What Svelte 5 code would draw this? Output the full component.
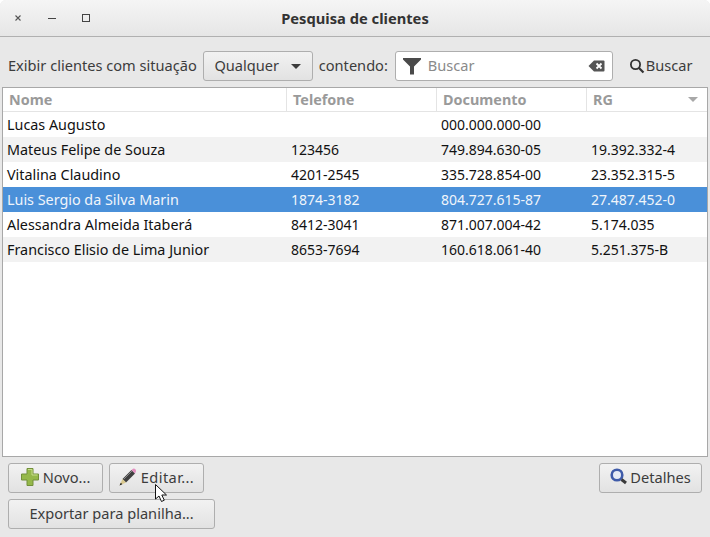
<script>
    const rows = [
        { nome: 'Lucas Augusto', tel: '', doc: '000.000.000-00', rg: '' },
        { nome: 'Mateus Felipe de Souza', tel: '123456', doc: '749.894.630-05', rg: '19.392.332-4' },
        { nome: 'Vitalina Claudino', tel: '4201-2545', doc: '335.728.854-00', rg: '23.352.315-5' },
        { nome: 'Luis Sergio da Silva Marin', tel: '1874-3182', doc: '804.727.615-87', rg: '27.487.452-0', selected: true },
        { nome: 'Alessandra Almeida Itaberá', tel: '8412-3041', doc: '871.007.004-42', rg: '5.174.035' },
        { nome: 'Francisco Elisio de Lima Junior', tel: '8653-7694', doc: '160.618.061-40', rg: '5.251.375-B' }
    ];
</script>

<div class="window">
    <header class="titlebar">
        <div class="controls">
            <svg width="10" height="10" viewBox="0 0 10 10"><path d="M2.500 2.500l5 5M7.500 2.500l-5 5" stroke="#555" stroke-width="1.100" /></svg>
            <svg width="10" height="10" viewBox="0 0 10 10"><path d="M1 5.500h8" stroke="#444" stroke-width="1" /></svg>
            <svg width="10" height="10" viewBox="0 0 10 10"><rect x="1.500" y="1.500" width="7" height="7" fill="none" stroke="#444" /></svg>
        </div>
        <div class="title">Pesquisa de clientes</div>
    </header>

    <div class="toolbar">
        <span class="label">Exibir clientes com situação</span>
        <button class="btn combo">Qualquer <span class="arrow"></span></button>
        <span class="label contendo">contendo:</span>
        <div class="search">
            <svg width="18" height="18" viewBox="0 0 18 18"><path d="M0 1h18v1.500L11 9.500V17.500H7V9.500L0 2.500z" fill="#4a4a4a" /></svg>
            <span class="placeholder">Buscar</span>
            <svg width="17" height="12" viewBox="0 0 17 12"><path d="M6 .5h9.500a1 1 0 0 1 1 1v9a1 1 0 0 1-1 1H6L.5 6z" fill="#555" /><path d="M8.500 3.500l5 5M13.500 3.500l-5 5" stroke="#fff" stroke-width="1.800" /></svg>
        </div>
        <div class="find">
            <svg width="16" height="16" viewBox="0 0 16 16"><circle cx="6.500" cy="6.500" r="4.600" fill="none" stroke="#333" stroke-width="1.800" /><path d="M10 10l4.500 4.500" stroke="#333" stroke-width="2.200" /></svg>
            <span class="label">Buscar</span>
        </div>
    </div>

    <div class="table">
        <div class="row head">
            <div>Nome</div>
            <div>Telefone</div>
            <div>Documento</div>
            <div>RG<span class="sort"></span></div>
        </div>
        {#each rows as r}
            <div class="row item" class:selected={r.selected}>
                <div class="name">{r.nome}</div>
                <div>{r.tel}</div>
                <div>{r.doc}</div>
                <div>{r.rg}</div>
            </div>
        {/each}
    </div>

    <div class="actions">
        <div class="line">
            <button class="btn w-novo">
                <svg width="18" height="18" viewBox="0 0 18 18">
                    <path d="M6 .5h6v5.500h5.500v6H12v5.500H6V12H.5V6H6z" fill="#95b84a" stroke="#72903a" />
                    <path d="M7 1.500h4v5.500h5.500" fill="none" stroke="#c6dc8c" />
                </svg>
                Novo...
            </button>
            <button class="btn w-editar">
                <svg width="18" height="18" viewBox="0 0 18 18">
                    <path d="M3.500 11L12.500 2l3.500 3.500-9 9z" fill="#3f3f3f" />
                    <path d="M5 11L13 3" stroke="#8a8a8a" />
                    <path d="M12.500 2L14 .8q1-.8 2.200.300t.700 2.600L16 5.500z" fill="#e48fc0" />
                    <path d="M.5 17.500l3-6.500 3.500 3.500z" fill="#d9c88e" />
                    <path d="M.5 17.500l1.300-2.800 1.500 1.500z" fill="#222" />
                </svg>
                Editar...
                <svg class="cursor" width="14" height="19" viewBox="0 0 14 19"><path d="M.500.500v14.500l3.500-3 2.500 5.500 2.800-1.300-2.500-5.200h4.700z" fill="#fff" stroke="#111" /></svg>
            </button>
            <button class="btn w-detalhes">
                <svg width="18" height="18" viewBox="0 0 18 18">
                    <circle cx="7" cy="7" r="5.300" fill="#e6ebf5" stroke="#3f5ba9" stroke-width="2.600" />
                    <path d="M11.500 11.500l4.500 3.500" stroke="#3a3a3a" stroke-width="3" />
                </svg>
                Detalhes
            </button>
        </div>
        <button class="btn w-exportar">Exportar para planilha...</button>
    </div>
</div>

<style>
    :global(body) {
        margin: 0;
        background: #fff;
    }

    .window {
        width: 710px;
        height: 537px;
        display: flex;
        flex-direction: column;
        overflow: hidden;
        background: #e8e8e8;
        border-radius: 6px 6px 0 0;
        font-family: "Noto Sans", sans-serif;
        font-size: 14.6px;
        color: #3c3c3c;
    }

    .titlebar {
        height: 36px;
        flex-shrink: 0;
        display: flex;
        align-items: center;
        justify-content: center;
        position: relative;
        background: linear-gradient(#f5f5f5, #e6e6e6);
        border-bottom: 1px solid #b0b0b0;
    }

    .controls {
        position: absolute;
        left: 13px;
        top: 13px;
        display: flex;
        gap: 24px;
    }

    .controls svg {
        display: block;
    }

    .title {
        font-weight: 700;
        font-size: 14.7px;
        color: #333;
    }

    .toolbar {
        height: 30px;
        margin-top: 14px;
        padding: 0 8px;
        display: flex;
        align-items: center;
        gap: 6px;
        flex-shrink: 0;
    }

    .label {
        padding-bottom: 2px;
    }

    .contendo {
        margin-right: 1px;
    }

    .btn {
        height: 30px;
        box-sizing: border-box;
        border: 1px solid #aeaeae;
        border-radius: 3px;
        background: linear-gradient(#f2f2f2, #e2e2e2);
        font: inherit;
        color: #3c3c3c;
        padding: 0 0 2px;
        display: flex;
        align-items: center;
        justify-content: center;
        gap: 4px;
    }

    .combo {
        width: 110px;
        gap: 12px;
    }

    .arrow {
        width: 0;
        height: 0;
        margin-top: 2px;
        border-left: 5px solid transparent;
        border-right: 5px solid transparent;
        border-top: 5px solid #3c3c3c;
    }

    .search {
        width: 218px;
        height: 30px;
        box-sizing: border-box;
        border: 1px solid #aeaeae;
        border-radius: 3px;
        background: #fff;
        display: flex;
        align-items: center;
        padding: 0 7px;
        gap: 7px;
    }

    .placeholder {
        flex: 1;
        padding-bottom: 2px;
        color: #8a8a8a;
    }

    .find {
        display: flex;
        align-items: center;
        gap: 1px;
        margin-left: 10px;
    }

    .table {
        margin: 6px 2px 0;
        height: 370px;
        flex-shrink: 0;
        box-sizing: border-box;
        border: 1px solid #a8a8a8;
        background: #fff;
        color: #111;
        font-size: 14px;
    }

    .row {
        display: grid;
        grid-template-columns: 284px 150px 150px 1fr;
    }

    .head {
        height: 24px;
        box-sizing: border-box;
        border-bottom: 1px solid #e4e4e4;
        color: #9a9a9a;
        font-weight: 700;
        font-size: 14.4px;
        line-height: 23px;
    }

    .head > div {
        padding-left: 6px;
        border-right: 1px solid #e4e4e4;
        position: relative;
    }

    .head > div:last-child {
        border-right: 0;
    }

    .sort {
        position: absolute;
        right: 9px;
        top: 9px;
        border-left: 5px solid transparent;
        border-right: 5px solid transparent;
        border-top: 5px solid #a8a8a8;
    }

    .item {
        height: 25px;
        line-height: 25px;
    }

    .item > div {
        padding-left: 4px;
        white-space: nowrap;
    }

    .item > .name {
        font-size: 14.35px;
    }

    .item:nth-child(odd) {
        background: #f2f2f2;
    }

    .item.selected {
        background: #4a90d9;
        color: #f0f5fb;
    }

    .actions {
        padding: 6px 8px 0;
        display: flex;
        flex-direction: column;
        gap: 6px;
    }

    .line {
        display: flex;
        gap: 6px;
    }

    .w-novo,
    .w-editar {
        width: 95px;
    }

    .w-editar {
        position: relative;
        letter-spacing: .4px;
    }

    .cursor {
        position: absolute;
        left: 45px;
        top: 20px;
    }

    .w-detalhes {
        width: 103px;
        margin-left: auto;
        gap: 2px;
    }

    .w-exportar {
        width: 207px;
    }
</style>
